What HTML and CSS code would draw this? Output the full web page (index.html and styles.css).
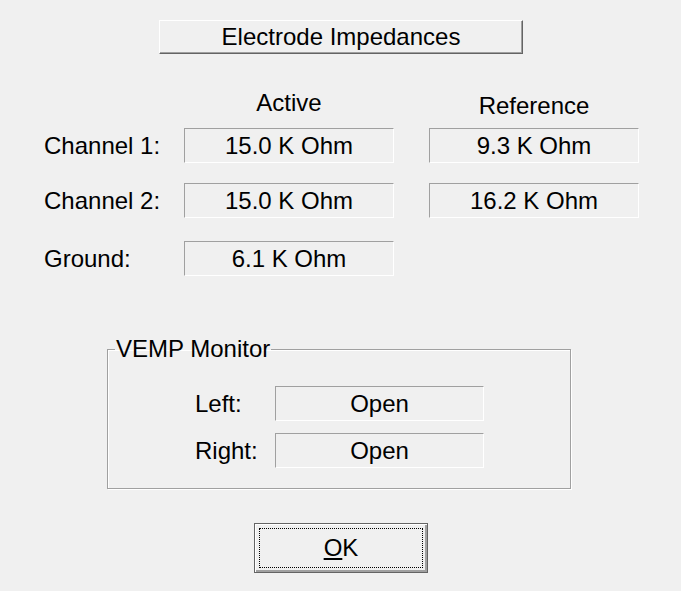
FILE: index.html
```html
<!DOCTYPE html>
<html lang="en">

<head>
    <meta charset="UTF-8">
    <meta name="viewport" content="width=device-width, initial-scale=1.0">
    <title>Electrode Impedances</title>
    <link rel="stylesheet" href="styles.css">
</head>

<body>
    <div class="dialog">
        <div class="title-button">Electrode Impedances</div>

        <div class="impedance-table">
            <div class="imp-row head-row">
                <div class="row-label"></div>
                <div class="col-head active-head">Active</div>
                <div class="col-head ref-head">Reference</div>
            </div>
            <div class="imp-row channel-row">
                <div class="row-label">Channel 1:</div>
                <div class="value-box">15.0 K Ohm</div>
                <div class="value-box">9.3 K Ohm</div>
            </div>
            <div class="imp-row channel-row">
                <div class="row-label">Channel 2:</div>
                <div class="value-box">15.0 K Ohm</div>
                <div class="value-box">16.2 K Ohm</div>
            </div>
            <div class="imp-row ground-row">
                <div class="row-label">Ground:</div>
                <div class="value-box">6.1 K Ohm</div>
            </div>
        </div>

        <fieldset class="group-box">
            <legend>VEMP Monitor</legend>
            <div class="monitor-grid">
                <div class="row-label">Left:</div>
                <div class="value-box">Open</div>
                <div class="row-label">Right:</div>
                <div class="value-box">Open</div>
            </div>
        </fieldset>

        <div class="ok-row">
            <button class="ok-button"><span class="focus-rect"><u>O</u>K</span></button>
        </div>
    </div>
</body>

</html>
```

FILE: styles.css
```css
body {
    margin: 0;
    background-color: #f0f0f0;
    font-family: 'Liberation Sans', Arial, sans-serif;
    font-size: 24px;
    color: #000;
}

.dialog {
    width: 681px;
    height: 591px;
    padding-top: 20px;
    box-sizing: border-box;
}

.title-button {
    margin-left: 159px;
    width: 364px;
    height: 34px;
    box-sizing: border-box;
    border-top: 1px solid #fff;
    border-left: 1px solid #fff;
    border-right: 1px solid #646464;
    border-bottom: 1px solid #646464;
    box-shadow: inset -1px -1px 0 #a0a0a0;
    display: flex;
    align-items: center;
    justify-content: center;
    line-height: 1;
}

.impedance-table {
    margin: 36px 0 0 44px;
    display: flex;
    flex-direction: column;
}

.imp-row {
    display: flex;
    align-items: center;
    gap: 35px;
}

.head-row {
    height: 38px;
    align-items: flex-end;
}

.channel-row + .channel-row {
    margin-top: 20px;
}

.ground-row {
    margin-top: 23px;
}

.col-head {
    width: 210px;
    text-align: center;
    line-height: 24px;
}

.active-head {
    margin-bottom: 13px;
}

.ref-head {
    margin-bottom: 10px;
}

.row-label {
    width: 105px;
    line-height: 24px;
    white-space: nowrap;
}

.value-box {
    width: 210px;
    height: 35px;
    box-sizing: border-box;
    border-top: 1px solid #a0a0a0;
    border-left: 1px solid #a0a0a0;
    border-right: 1px solid #fff;
    border-bottom: 1px solid #fff;
    display: flex;
    align-items: center;
    justify-content: center;
    line-height: 1;
    white-space: nowrap;
}

.group-box {
    margin: 61px 0 0 107px;
    width: 464px;
    height: 152px;
    box-sizing: border-box;
    padding: 0;
    border: 1px solid #a0a0a0;
    box-shadow: inset 1px 1px 0 #fff, 1px 1px 0 #fff;
}

.group-box legend {
    margin-left: 7px;
    padding: 0 1px;
    line-height: 24px;
}

.monitor-grid {
    margin: 25px 0 0 87px;
    display: grid;
    grid-template-columns: 80px 209px;
    grid-template-rows: 35px 35px;
    row-gap: 12px;
    align-items: center;
}

.monitor-grid .row-label,
.monitor-grid .value-box {
    width: auto;
}

.ok-row {
    margin-top: 34px;
    padding-left: 254px;
}

.ok-button {
    width: 174px;
    height: 50px;
    padding: 4px;
    box-sizing: border-box;
    background-color: #f0f0f0;
    border: 1px solid #646464;
    box-shadow: inset 1px 1px 0 #fff, inset -2px -2px 0 #a0a0a0;
    font-family: inherit;
    font-size: 24px;
    color: #000;
    display: flex;
}

.focus-rect {
    flex: 1;
    border: 1px dotted #000;
    display: flex;
    align-items: center;
    justify-content: center;
    line-height: 1;
}
```
